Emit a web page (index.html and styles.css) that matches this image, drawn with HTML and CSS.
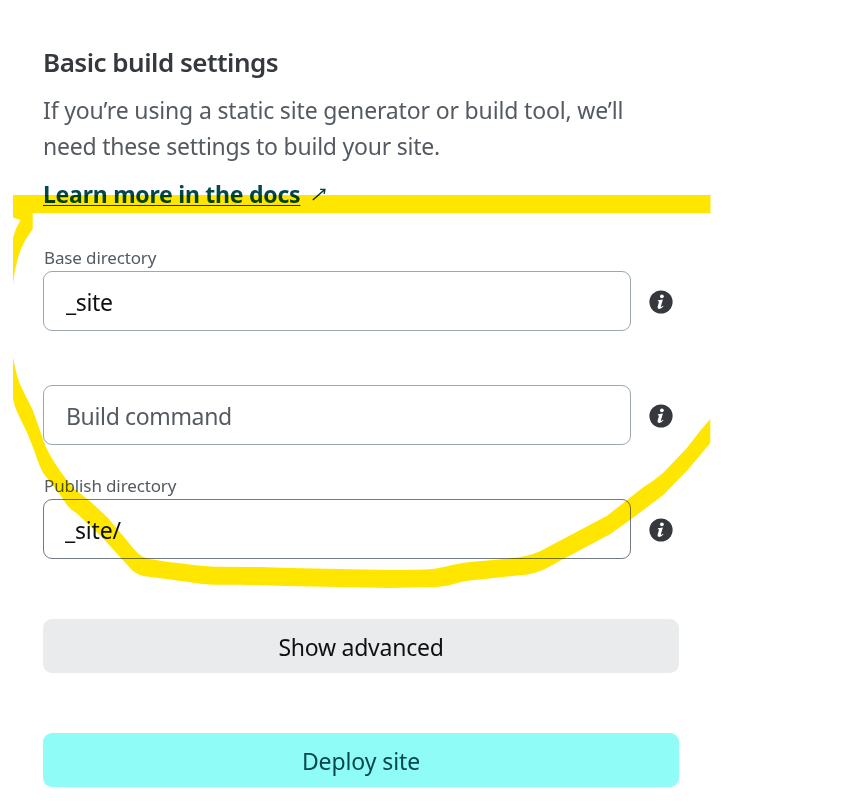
FILE: index.html
```html
<!DOCTYPE html>
<html lang="en">
<head>
<meta charset="utf-8">
<title>Basic build settings</title>
<link rel="stylesheet" href="styles.css">
</head>
<body>
<svg class="defs" width="0" height="0" aria-hidden="true">
  <symbol id="info" viewBox="0 0 24 24">
    <circle cx="12" cy="12" r="11.6" fill="#35393d"/>
    <circle cx="12.9" cy="6.3" r="1.9" fill="#fff"/>
    <path d="M9 10.2 13.9 9.6 11.9 16.2Q11.7 17.1 12.4 16.8L14.1 15.7 14.5 16.3Q12.3 18.9 10.1 18.9 8.1 18.8 8.6 16.7L10.1 11.6 8.7 11.3Z" fill="#fff"/>
  </symbol>
</svg>
<main class="settings">
  <h1 class="title">Basic build settings</h1>
  <p class="intro"><span class="line-one">If you’re using a static site generator or build tool, we’ll</span><br><span class="line-two">need these settings to build your site.</span></p>
  <div class="docs">
    <a class="docs-link" href="#">Learn more in the docs</a>
    <svg class="arrow" width="15" height="13" viewBox="0 0 15 13"><path d="M.8 12 12.6 1.6M8 1.4H12.9L12.2 6" fill="none" stroke="#053b3f" stroke-width="1.4"/></svg>
  </div>
  <form class="form">
    <div class="field">
      <label class="label label-base" for="base">Base directory</label>
      <div class="row"><input class="input" id="base" value="_site"><svg class="info" width="24" height="24"><use href="#info"/></svg></div>
    </div>
    <div class="field">
      <div class="label"></div>
      <div class="row"><input class="input input-command" placeholder="Build command"><svg class="info" width="24" height="24"><use href="#info"/></svg></div>
    </div>
    <div class="field">
      <label class="label label-publish" for="publish">Publish directory</label>
      <div class="row"><input class="input input-dark" id="publish" value="_site/"><svg class="info" width="24" height="24"><use href="#info"/></svg></div>
    </div>
    <button class="button button-advanced" type="button">Show advanced</button>
    <button class="button button-deploy" type="button">Deploy site</button>
  </form>
</main>
<svg class="marker" width="868" height="805" viewBox="0 0 868 805" aria-hidden="true">
  <path d="M13 195H710.5V213H32.7V229.3Q25 239 20 251.5 15 266 13 285V238Q15 229 20.5 220L13 217.5Z"/>
  <path d="M13 357.3Q17 379 21.7 388L32.7 410Q38 424 43.3 440 48 455 65 477.5 72 488 80 493.3L91 502 108 518 128 541.7Q137 554 143 556.7 150 560 180 563.3 197 566 213 566.7L260 567 290 568 390 570Q420 570 432 569 440 568 452 565 461 563 470 562L506.7 558.7Q528 557 540 551.3L606.7 516 643.3 487.3Q655 480 663.3 472.7L686.7 448.3 700 431 710.3 419V443L688.3 469.3 663.3 495 650 505 630 520 610 534.3 560 560.7Q546 569 540 571 532 574.5 520 575.3L470 580.6Q462 581.5 454 584 446 586.5 436 587L390 588 286.7 586 240 584.7H213Q200 584 186.7 581.7L143.3 576Q135 574 130 568L103 538.3 76.7 513.3Q68 508 65 502L58 491.7 43.3 473.3Q40 468 34 450L26.7 431.7 18 414Q14 406 13 398.3Z"/>
</svg>
</body>
</html>
```
FILE: styles.css
```css
* { box-sizing: border-box; }
body {
  margin: 0;
  background: #fff;
  font-family: "Noto Sans", "Open Sans", sans-serif;
  font-size: 23px;
  color: #0e1e25;
}
.defs { position: absolute; }
.settings { width: 679px; padding: 44px 0 0 43px; }
.title { margin: 0; font-size: 26px; line-height: 36px; font-weight: 600; letter-spacing: -0.5px; color: #35393d; white-space: nowrap; }
.intro { margin: 12px 0 0; line-height: 36px; color: #545a61; white-space: nowrap; }
.line-one { letter-spacing: -0.155px; }
.line-two { letter-spacing: -0.23px; }
.docs { display: flex; align-items: center; gap: 12px; height: 36px; margin-top: 12px; }
.docs-link {
  font-weight: 700;
  line-height: 36px;
  letter-spacing: -0.24px;
  color: #05484b;
  text-decoration: underline;
  text-decoration-thickness: 1px;
  text-underline-offset: 2px;
  text-decoration-skip-ink: none;
  white-space: nowrap;
}
.arrow { margin-top: 1px; }
.form { display: flex; flex-direction: column; margin-top: 32px; }
.field { height: 114px; }
.label { display: block; height: 27px; padding-left: 1px; font-size: 17px; line-height: 27px; letter-spacing: -0.13px; color: #545a61; }
.row { display: flex; align-items: center; gap: 18px; }
.input {
  width: 588px;
  height: 60px;
  padding: 2px 22px 0;
  border: 1px solid #9da7b2;
  border-radius: 9px;
  background: #fff;
  font: inherit;
  letter-spacing: -0.35px;
  color: #0e1013;
  outline: 0;
}
.input::placeholder { color: #545a61; opacity: 1; }
.input-dark { border-color: #737a85; padding-left: 21px; letter-spacing: -0.2px; }
.info { flex: none; margin-top: 2px; }
.button { height: 54px; padding: 1px 0 0; border: 0; border-radius: 9px; font: inherit; letter-spacing: -0.25px; }
.button-advanced { margin-top: 33px; background: #e9ebed; color: #0e1013; }
.button-deploy { margin-top: 60px; background: #8ffcf7; color: #05484b; letter-spacing: -0.1px; }
.marker { position: absolute; left: 0; top: 0; fill: #ffe600; mix-blend-mode: multiply; pointer-events: none; }
```
